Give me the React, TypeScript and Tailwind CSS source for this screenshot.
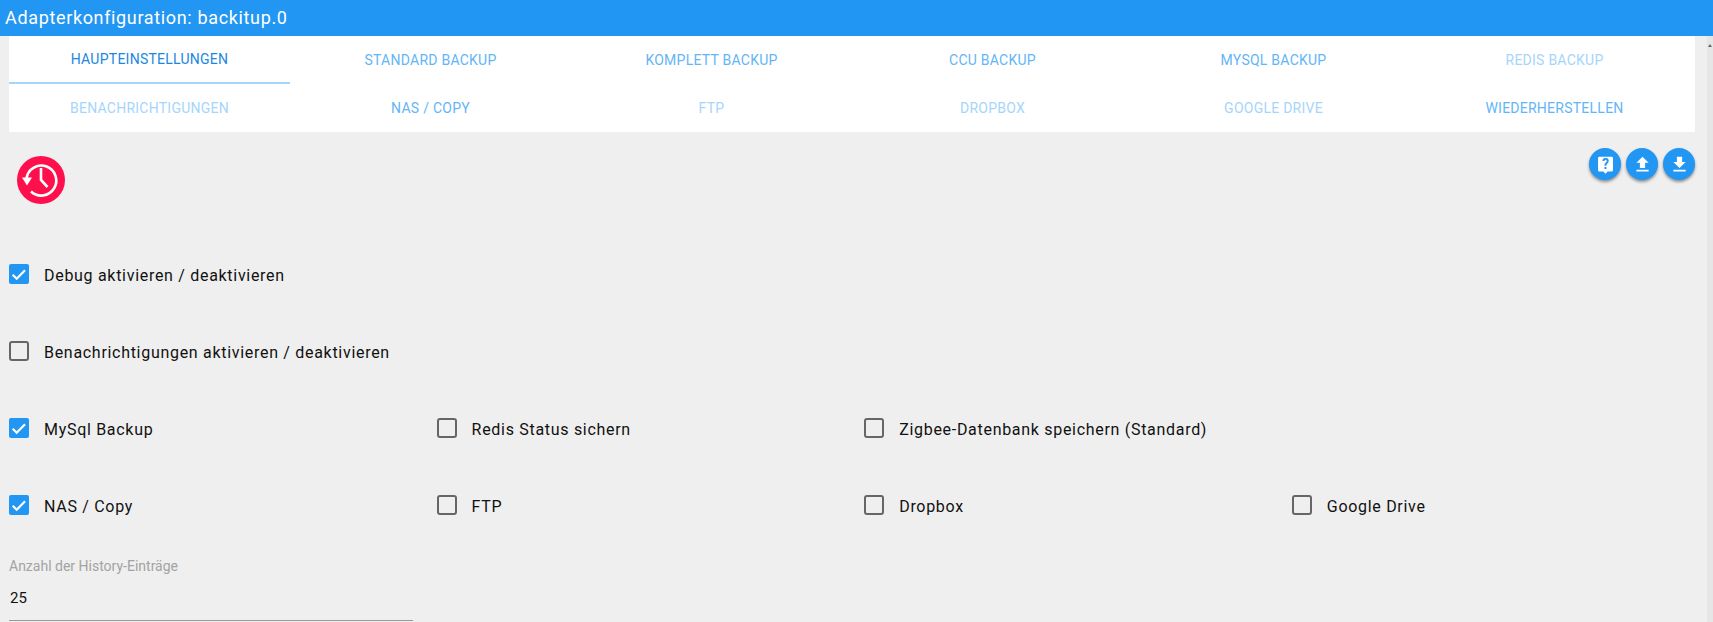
const font = "font-['Roboto','Liberation_Sans',sans-serif]";

const tabs = [
  { label: "HAUPTEINSTELLUNGEN", color: "text-[#1a87e3]", active: true },
  { label: "STANDARD BACKUP", color: "text-[#64b5f6]" },
  { label: "KOMPLETT BACKUP", color: "text-[#64b5f6]" },
  { label: "CCU BACKUP", color: "text-[#64b5f6]" },
  { label: "MYSQL BACKUP", color: "text-[#64b5f6]" },
  { label: "REDIS BACKUP", color: "text-[#a6d5fa]" },
  { label: "BENACHRICHTIGUNGEN", color: "text-[#a6d5fa]" },
  { label: "NAS / COPY", color: "text-[#64b5f6]" },
  { label: "FTP", color: "text-[#a6d5fa]" },
  { label: "DROPBOX", color: "text-[#a6d5fa]" },
  { label: "GOOGLE DRIVE", color: "text-[#a6d5fa]" },
  { label: "WIEDERHERSTELLEN", color: "text-[#64b5f6]" },
];

function Box({ label, checked }: { label: string; checked?: boolean }) {
  return (
    <div className="flex items-center h-5">
      {checked ? (
        <span className="w-5 h-5 rounded-[2px] bg-[#2196f3] flex items-center justify-center">
          <svg width="20" height="20" viewBox="0 0 20 20" fill="none" stroke="white" strokeWidth="2.2">
            <path d="M3.7 10.800 7.700 14.800 16 6.300" />
          </svg>
        </span>
      ) : (
        <span className="w-5 h-5 rounded-[3px] border-2 border-[#666666]" />
      )}
      <span className="ml-[15px] mt-1 text-[16px] tracking-[0.7px] text-[#111111] whitespace-nowrap">{label}</span>
    </div>
  );
}

function Fab({ children }: { children: React.ReactNode }) {
  return (
    <button className="w-8 h-8 rounded-full bg-[#2196f3] flex items-center justify-center shadow-[0_2px_3px_rgba(0,0,0,0.4)]">
      <svg width="21" height="21" viewBox="0 0 24 24" fill="white">
        {children}
      </svg>
    </button>
  );
}

export default function App() {
  return (
    <div className={`${font} w-[1713px] h-[622px] overflow-hidden bg-[#efefef] flex flex-col`}>
      <div className="h-9 shrink-0 bg-[#2196f3] text-white text-[18px] leading-9 pl-[5px] tracking-[0.65px]">
        Adapterkonfiguration: backitup.0
      </div>
      <div className="flex flex-1 min-h-0">
        <div className="w-[1707px] pl-[9px] pr-3">
          <div className="bg-white grid grid-cols-6">
            {tabs.map((t) => (
              <div
                key={t.label}
                className={`h-12 flex items-center justify-center text-[14px] tracking-[0.25px] ${t.color} ${t.active ? "border-b-2 border-[#a6d5fa]" : ""}`}
              >
                {t.label}
              </div>
            ))}
          </div>
          <div className="flex justify-between items-start">
            <div className="mt-6 ml-2 w-12 h-12 rounded-full bg-[#ff0f4b]">
              <svg width="48" height="48" viewBox="0 0 48 48" fill="none" stroke="white" strokeWidth="2.6">
                <path d="M9.500 22A15 15 0 1 1 14 35.500" />
                <path d="M5 21.500h10l-5 8z" fill="white" stroke="none" />
                <path d="M24 12v12l6.500 7" />
              </svg>
            </div>
            <div className="mt-4 flex gap-[5px]">
              <Fab>
                <path d="M5 3h14a1.500 1.500 0 0 1 1.500 1.500v14A1.500 1.500 0 0 1 19 20h-4.500L12 22.500 9.500 20H5a1.500 1.500 0 0 1-1.500-1.500v-14A1.500 1.500 0 0 1 5 3z" />
                <text x="12" y="17" textAnchor="middle" fontSize="16" fontWeight="700" fill="#2196f3">?</text>
              </Fab>
              <Fab>
                <path d="M5 20h14v-2H5v2zm0-10h4v6h6v-6h4l-7-7-7 7z" />
              </Fab>
              <Fab>
                <path d="M19 9h-4V3H9v6H5l7 7 7-7zM5 18v2h14v-2H5z" />
              </Fab>
            </div>
          </div>
          <div className="mt-[60px]">
            <Box label="Debug aktivieren / deaktivieren" checked />
          </div>
          <div className="mt-[57px]">
            <Box label="Benachrichtigungen aktivieren / deaktivieren" />
          </div>
          <div className="mt-[57px] grid grid-cols-[repeat(4,427.6px)]">
            <Box label="MySql Backup" checked />
            <Box label="Redis Status sichern" />
            <Box label="Zigbee-Datenbank speichern (Standard)" />
          </div>
          <div className="mt-[57px] grid grid-cols-[repeat(4,427.6px)]">
            <Box label="NAS / Copy" checked />
            <Box label="FTP" />
            <Box label="Dropbox" />
            <Box label="Google Drive" />
          </div>
          <div className="mt-[43px] w-[404px] border-b border-[#9a9a9a] h-[63px]">
            <div className="text-[14px] leading-4 text-[#a3a3a3]">Anzahl der History-Einträge</div>
            <div className="mt-[14px] ml-px text-[15px] leading-5 text-[#111111]">25</div>
          </div>
        </div>
        <div className="w-[6px] bg-[#e6e6e6] flex justify-end pt-2 pr-px">
          <span className="w-0 h-0 border-x-[2px] border-x-transparent border-b-[3px] border-b-[#666666]" />
        </div>
      </div>
    </div>
  );
}
